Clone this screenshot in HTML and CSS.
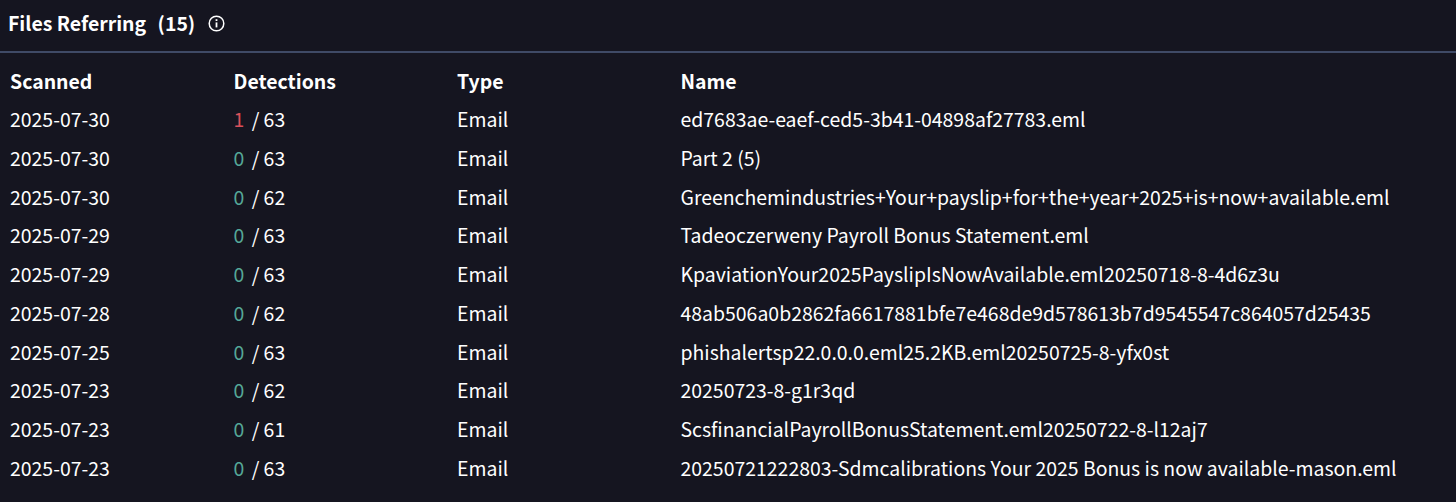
FILE: index.html
```html
<!DOCTYPE html>
<html lang="en">
<head>
<meta charset="utf-8">
<title>Files Referring</title>
<link rel="stylesheet" href="styles.css">
</head>
<body>
<header class="head">
<h2 class="title">Files Referring <span class="count">(15)</span></h2>
<svg class="info" width="17" height="17" viewBox="0 0 17 17" fill="none" stroke="#fff" stroke-width="1.5"><circle cx="8.5" cy="8.5" r="7.3"/><path d="M8.5 7.4v5" stroke-width="1.8"/><path d="M8.5 4.2v1.8" stroke-width="1.8"/></svg>
</header>
<div class="table">
<div class="row hd"><span>Scanned</span><span>Detections</span><span>Type</span><span>Name</span></div>
<div class="row"><span>2025-07-30</span><span><b class="bad">1</b> / 63</span><span>Email</span><span>ed7683ae-eaef-ced5-3b41-04898af27783.eml</span></div>
<div class="row"><span>2025-07-30</span><span><b class="ok">0</b> / 63</span><span>Email</span><span>Part 2 (5)</span></div>
<div class="row"><span>2025-07-30</span><span><b class="ok">0</b> / 62</span><span>Email</span><span>Greenchemindustries+Your+payslip+for+the+year+2025+is+now+available.eml</span></div>
<div class="row"><span>2025-07-29</span><span><b class="ok">0</b> / 63</span><span>Email</span><span>Tadeoczerweny Payroll Bonus Statement.eml</span></div>
<div class="row"><span>2025-07-29</span><span><b class="ok">0</b> / 63</span><span>Email</span><span>KpaviationYour2025PayslipIsNowAvailable.eml20250718-8-4d6z3u</span></div>
<div class="row"><span>2025-07-28</span><span><b class="ok">0</b> / 62</span><span>Email</span><span>48ab506a0b2862fa6617881bfe7e468de9d578613b7d9545547c864057d25435</span></div>
<div class="row"><span>2025-07-25</span><span><b class="ok">0</b> / 63</span><span>Email</span><span>phishalertsp22.0.0.0.eml25.2KB.eml20250725-8-yfx0st</span></div>
<div class="row"><span>2025-07-23</span><span><b class="ok">0</b> / 62</span><span>Email</span><span>20250723-8-g1r3qd</span></div>
<div class="row"><span>2025-07-23</span><span><b class="ok">0</b> / 61</span><span>Email</span><span>ScsfinancialPayrollBonusStatement.eml20250722-8-l12aj7</span></div>
<div class="row"><span>2025-07-23</span><span><b class="ok">0</b> / 63</span><span>Email</span><span>20250721222803-Sdmcalibrations Your 2025 Bonus is now available-mason.eml</span></div>
</div>
</body>
</html>
```
FILE: styles.css
```css
* { box-sizing: border-box; }
html, body { margin: 0; height: 100%; }
body { background: #151520; color: #fff; font-family: "Noto Sans CJK SC", "Noto Sans", sans-serif; font-size: 19.45px; overflow: hidden; }
.head { height: 53px; display: flex; align-items: center; gap: 13px; padding: 0 8px 5px; border-bottom: 2px solid #3f4a66; }
.title { margin: 0; font-size: 19.45px; font-weight: 700; line-height: 26px; }
.count { margin-left: 7px; }
.table { padding-top: 7.75px; }
.row { display: grid; grid-template-columns: 223.5px 223.5px 223.5px 1fr; padding-left: 10px; height: 38.72px; align-items: center; white-space: nowrap; }
.hd { font-weight: 700; }
.row b { font-weight: 400; margin-right: 3px; }
.bad { color: #d9505a; }
.ok { color: #55a898; }
```
